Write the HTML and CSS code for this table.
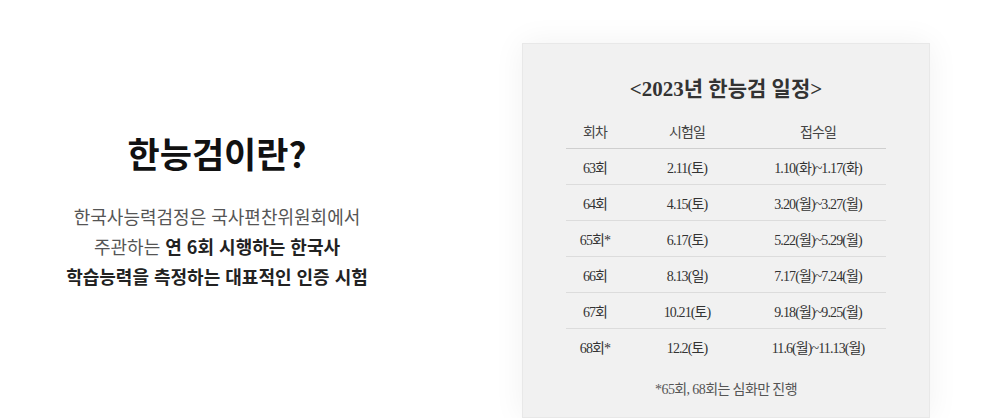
FILE: index.html
```html
<!DOCTYPE HTML>
<html lang="ko">
<head>
    <meta name="viewport" content="width=device-width, initial-scale=1">
    <title>한능검이란?</title>
    <link rel="stylesheet" href="styles.css">
</head>
<body>
    <div class="wrap">
        <div class="intro">
            <h2>한능검이란?</h2>
            <p>한국사능력검정은 국사편찬위원회에서<br>
            주관하는 <b>연 6회 시행하는 한국사</b><br>
            <b>학습능력을 측정하는 대표적인 인증 시험</b></p>
        </div>
        <div class="card">
            <h3>&lt;2023년 한능검 일정&gt;</h3>
            <table class="schedule">
                <thead>
                    <tr><th class="c1">회차</th><th class="c2">시험일</th><th class="c3">접수일</th></tr>
                </thead>
                <tbody>
                    <tr><td>63회</td><td>2.11(토)</td><td>1.10(화)~1.17(화)</td></tr>
                    <tr><td>64회</td><td>4.15(토)</td><td>3.20(월)~3.27(월)</td></tr>
                    <tr><td>65회*</td><td>6.17(토)</td><td>5.22(월)~5.29(월)</td></tr>
                    <tr><td>66회</td><td>8.13(일)</td><td>7.17(월)~7.24(월)</td></tr>
                    <tr><td>67회</td><td>10.21(토)</td><td>9.18(월)~9.25(월)</td></tr>
                    <tr><td>68회*</td><td>12.2(토)</td><td>11.6(월)~11.13(월)</td></tr>
                </tbody>
            </table>
            <p class="note">*65회, 68회는 심화만 진행</p>
        </div>
    </div>
</body>
</html>
```

FILE: styles.css
```css
body {
    margin: 0;
    background: #fff;
    font-family: "Noto Sans CJK KR", "Noto Sans", sans-serif;
    color: #333;
    overflow: hidden;
}
.wrap {
    display: flex;
    align-items: flex-start;
    padding-top: 43px;
}
.intro {
    width: 434px;
    text-align: center;
    padding-top: 82px;
}
.intro h2 {
    margin: 0;
    font-size: 35px;
    line-height: 56px;
    font-weight: 700;
    color: #111;
}
.intro p {
    margin: 20px 0 0;
    font-size: 18px;
    line-height: 30px;
    color: #555;
}
.intro b {
    font-weight: 700;
    color: #222;
}
.card {
    margin-left: 88px;
    width: 406px;
    height: 373px;
    background: #f1f1f1;
    border: 1px solid #e8e8e8;
    box-shadow: 0 0 30px rgba(0, 0, 0, 0.06);
    text-align: center;
    font-family: "Liberation Serif", "Noto Sans CJK KR", serif;
}
.card h3 {
    margin: 31px 0 0;
    font-size: 21px;
    line-height: 28px;
    font-weight: 700;
    color: #333;
}
.schedule {
    width: 320px;
    margin: 10px auto 0;
    border-collapse: collapse;
    font-size: 14px;
    color: #333;
    letter-spacing: -0.9px;
}
.schedule th,
.schedule td {
    padding: 0;
    height: 35px;
}
.schedule th {
    font-weight: 400;
    color: #444;
    border-bottom: 1px solid #cfcfcf;
}
.schedule td {
    border-bottom: 1px solid #dcdcdc;
}
.schedule tr:last-child td {
    border-bottom: none;
}
.schedule .c1 {
    width: 58px;
}
.schedule .c2 {
    width: 126px;
}
.note {
    margin: 14px 0 0;
    font-size: 14px;
    color: #555;
    letter-spacing: -0.6px;
}
```
